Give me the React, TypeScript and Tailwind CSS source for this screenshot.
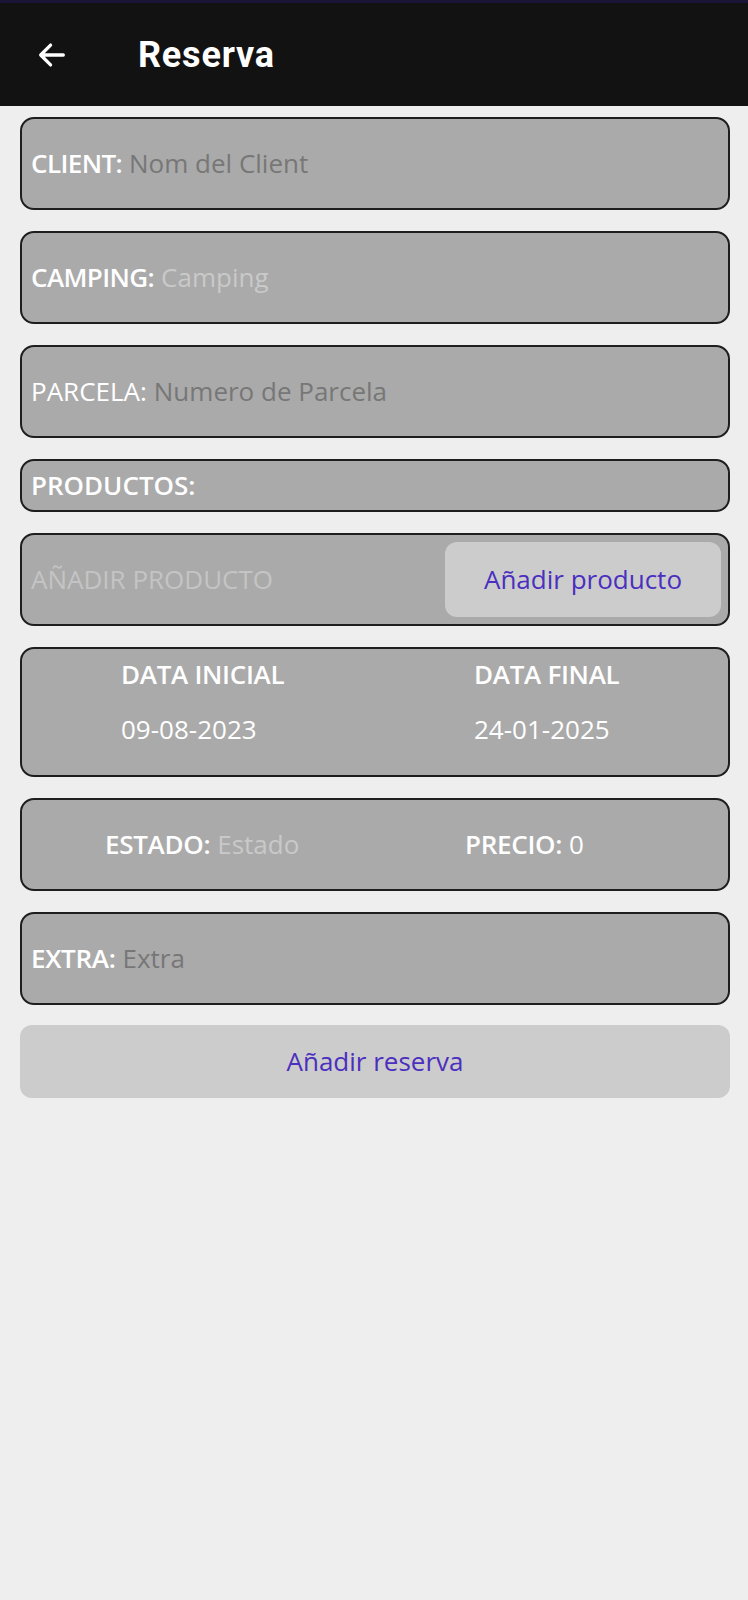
import React from 'react';

const font = { fontFamily: '"Open Sans", "Noto Sans", sans-serif' };

const Card: React.FC<{ className?: string; children: React.ReactNode }> = ({ className = '', children }) => (
  <div className={`bg-[#aaaaaa] border-2 border-[#1e1e1e] rounded-[14px] ${className}`}>{children}</div>
);

const App: React.FC = () => {
  return (
    <div className="min-h-[1600px] bg-[#eeeeee] flex flex-col" style={font}>
      {/* Toolbar */}
      <div className="h-[3px] bg-[#1a1538]"></div>
      <div className="h-[103px] bg-[#121212] flex items-center">
        <div className="w-[104px] flex justify-center">
          <svg width="34" height="34" viewBox="0 0 24 24" fill="none" stroke="white" strokeWidth="2.3" strokeLinecap="round" strokeLinejoin="round">
            <path d="M20 12H4.5M11 5l-7 7 7 7" />
          </svg>
        </div>
        <h1 className="ml-[34px] text-white text-[36px] font-bold tracking-[0.8px]" style={{ fontFamily: 'Roboto, "Noto Sans", sans-serif' }}>
          Reserva
        </h1>
      </div>

      <div className="flex flex-col gap-[21px] pl-[20px] pr-[18px] pt-[11px] text-[26px]">
        <Card className="h-[93px] flex items-center pl-[9px]">
          <span className="text-white font-semibold tracking-[-0.6px]">CLIENT:</span>
          <span className="text-[#777777] ml-[7px]">Nom del Client</span>
        </Card>

        <Card className="h-[93px] flex items-center pl-[9px]">
          <span className="text-white font-semibold tracking-[-0.6px]">CAMPING:</span>
          <span className="text-[#c9c9c9] ml-[7px]">Camping</span>
        </Card>

        <Card className="h-[93px] flex items-center pl-[9px]">
          <span className="text-white">PARCELA:</span>
          <span className="text-[#777777] ml-[7px]">Numero de Parcela</span>
        </Card>

        <Card className="h-[53px] flex items-center pl-[9px]">
          <span className="text-white font-semibold">PRODUCTOS:</span>
        </Card>

        <Card className="h-[93px] flex items-center justify-between pl-[9px] pr-[7px]">
          <span className="text-[#c4c4c4]">AÑADIR PRODUCTO</span>
          <button className="w-[276px] h-[75px] bg-[#cccccc] rounded-[12px] text-[#4b2fbf]">
            Añadir producto
          </button>
        </Card>

        <Card className="h-[130px] grid grid-cols-2 items-start pt-[8px]">
          <div className="pl-[99px] flex flex-col gap-[21px]">
            <span className="text-white font-semibold tracking-[-0.3px] leading-[34px]">DATA INICIAL</span>
            <span className="text-white leading-[34px]">09-08-2023</span>
          </div>
          <div className="pl-[99px] flex flex-col gap-[21px]">
            <span className="text-white font-semibold tracking-[-0.3px] leading-[34px]">DATA FINAL</span>
            <span className="text-white leading-[34px]">24-01-2025</span>
          </div>
        </Card>

        <Card className="h-[93px] grid grid-cols-2 items-center">
          <div className="pl-[83px] flex items-center">
            <span className="text-white font-semibold tracking-[-0.3px]">ESTADO:</span>
            <span className="text-[#c9c9c9] ml-[7px]">Estado</span>
          </div>
          <div className="pl-[90px] flex items-center">
            <span className="text-white font-semibold tracking-[-0.3px]">PRECIO:</span>
            <span className="text-white ml-[7px]">0</span>
          </div>
        </Card>

        <Card className="h-[93px] flex items-center pl-[9px]">
          <span className="text-white font-semibold tracking-[-0.3px]">EXTRA:</span>
          <span className="text-[#777777] ml-[7px]">Extra</span>
        </Card>

        <button className="h-[73px] bg-[#cccccc] rounded-[12px] text-[#4b2fbf] -mt-[1px]">
          Añadir reserva
        </button>
      </div>
    </div>
  );
};

export default App;
